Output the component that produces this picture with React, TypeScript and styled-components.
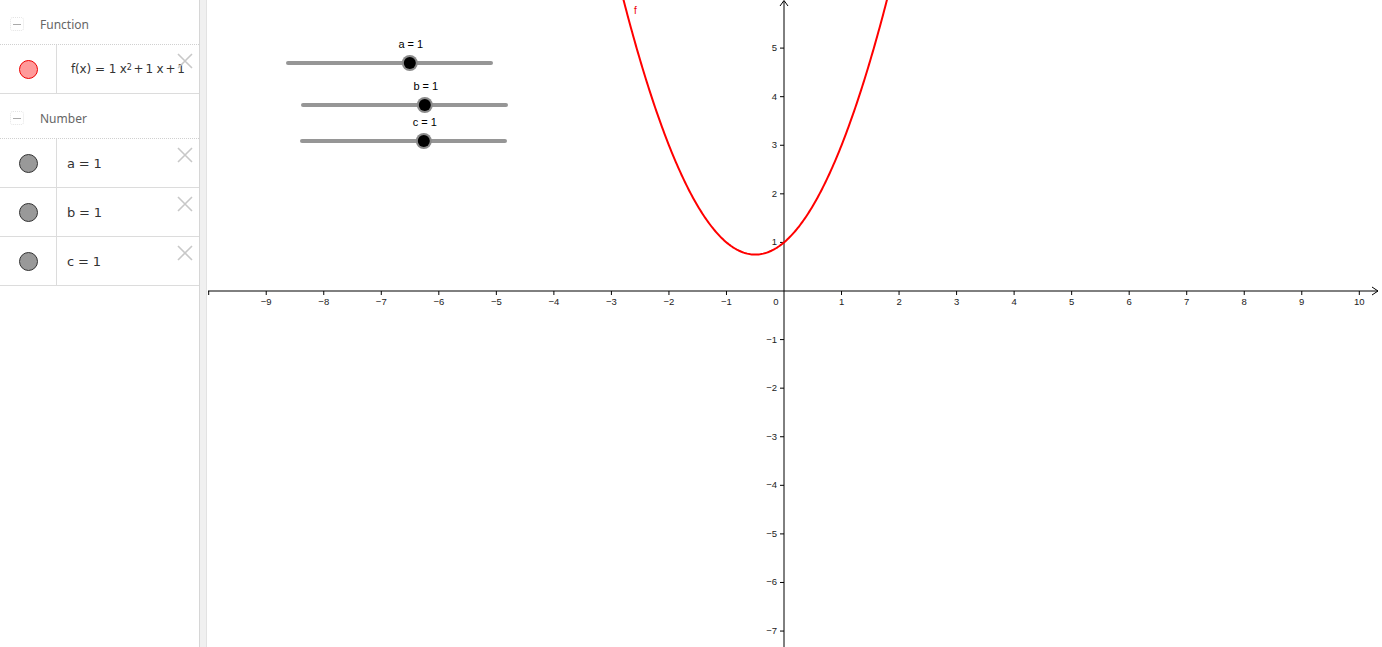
import React from "react";
import styled, { createGlobalStyle } from "styled-components";

const Global = createGlobalStyle`
  html, body { margin: 0; padding: 0; background: #fff; overflow: hidden; }
  #root { width: 1382px; height: 647px; }
`;

const Page = styled.div`
  display: flex;
  width: 1382px;
  height: 647px;
  font-family: "Noto Sans", "Liberation Sans", sans-serif;
`;

const Sidebar = styled.div`
  width: 200px;
  flex: none;
  border-right: 1px solid #d6d6d6;
  box-sizing: border-box;
  background: #fff;
  display: flex;
  flex-direction: column;
`;

const Splitter = styled.div`
  width: 7px;
  flex: none;
  background: #f0f0f0;
  border-right: 1px solid #e2e2e2;
  box-sizing: border-box;
`;

const GroupHeader = styled.div<{ $h: number }>`
  height: ${(p) => p.$h}px;
  box-sizing: border-box;
  display: flex;
  align-items: center;
  padding: 4px 0 0 10px;
  gap: 16px;
  border-bottom: 1px dotted #d0d0d0;
  color: #666;
  font-size: 12px;
`;

const Collapse = styled.span`
  width: 14px;
  height: 14px;
  box-sizing: border-box;
  border: 1px dotted #e4e4e4;
  border-radius: 3px;
  display: flex;
  align-items: center;
  justify-content: center;
  &::after {
    content: "";
    width: 8px;
    height: 1px;
    background: #aaa;
  }
`;

const Row = styled.div`
  height: 49px;
  box-sizing: border-box;
  display: flex;
  border-bottom: 1px solid #dcdcdc;
  position: relative;
`;

const MarkerCell = styled.div`
  width: 57px;
  flex: none;
  border-right: 1px solid #dcdcdc;
  box-sizing: border-box;
  display: flex;
  align-items: center;
  justify-content: center;
`;

const Marker = styled.span<{ $fill: string; $stroke: string }>`
  width: 19px;
  height: 19px;
  border-radius: 50%;
  box-sizing: border-box;
  background: ${(p) => p.$fill};
  border: 1px solid ${(p) => p.$stroke};
`;

const Formula = styled.div<{ $pad: number; $size: number }>`
  display: flex;
  align-items: center;
  padding-left: ${(p) => p.$pad}px;
  font-family: "DejaVu Sans", sans-serif;
  font-size: ${(p) => p.$size}px;
  color: #333;
  white-space: nowrap;
  letter-spacing: -0.2px;
  sup { font-size: 8px; position: relative; top: -2px; }
`;

const Op = styled.span<{ $m: number }>`
  margin: 0 ${(p) => p.$m}px;
`;

const Close = styled.span`
  position: absolute;
  right: 6px;
  top: 7px;
  width: 16px;
  height: 16px;
`;

const GraphArea = styled.div`
  flex: 1;
  position: relative;
  background: #fff;
`;

const OX = 577;
const OY = 291;
const UX = 57.53;
const UY = 48.58;

const sx = (x: number) => OX + x * UX;
const sy = (y: number) => OY - y * UY;

function parabola() {
  const pts: string[] = [];
  for (let x = -3.2; x <= 2.3; x += 0.02) {
    const y = x * x + x + 1;
    pts.push(`${sx(x).toFixed(2)},${sy(y).toFixed(2)}`);
  }
  return "M" + pts.join(" L");
}

const CloseIcon = () => (
  <Close>
    <svg width="16" height="16" viewBox="0 0 16 16">
      <path d="M1 1 L15 15 M15 1 L1 15" stroke="#c8c8c8" strokeWidth="1.6" />
    </svg>
  </Close>
);

const sliders = [
  { name: "a", x1: 81, x2: 284, y: 63, ly: 48 },
  { name: "b", x1: 96, x2: 299, y: 105, ly: 90 },
  { name: "c", x1: 95, x2: 298, y: 141, ly: 126 },
];

const Graph = () => {
  const xs: number[] = [];
  for (let k = -10; k <= 10; k++) if (k !== 0) xs.push(k);
  const ys: number[] = [];
  for (let k = -7; k <= 5; k++) if (k !== 0) ys.push(k);
  const lbl = (k: number) => (k < 0 ? "\u2212" + -k : String(k));
  return (
    <svg width="1175" height="647" viewBox="0 0 1175 647" style={{ display: "block" }}>
      <g fontFamily="Liberation Sans, Arial, sans-serif" fontSize="9.5" fill="#222">
        <line x1="1" y1={OY} x2="1171" y2={OY} stroke="#000" strokeWidth="1" />
        <path d={`M1165 ${OY - 4} L1171 ${OY} L1165 ${OY + 4}`} fill="none" stroke="#000" strokeWidth="1" />
        <line x1={OX} y1="1" x2={OX} y2="647" stroke="#000" strokeWidth="1" />
        <path d={`M${OX - 4} 6 L${OX} 0.5 L${OX + 4} 6`} fill="none" stroke="#000" strokeWidth="1" />
        {xs.map((k) => (
          <g key={"x" + k}>
            <line x1={sx(k)} y1={OY} x2={sx(k)} y2={OY + 4} stroke="#000" />
            {k > -10 && (
              <text x={sx(k)} y={OY + 14} textAnchor="middle">
                {lbl(k)}
              </text>
            )}
          </g>
        ))}
        <text x={OX - 8} y={OY + 14} textAnchor="middle">0</text>
        {ys.map((k) => (
          <g key={"y" + k}>
            <line x1={OX - 4} y1={sy(k)} x2={OX} y2={sy(k)} stroke="#000" />
            <text x={OX - 7} y={sy(k) + 3} textAnchor="end">
              {lbl(k)}
            </text>
          </g>
        ))}
      </g>
      <path d={parabola()} fill="none" stroke="#f00" strokeWidth="2" />
      <text x="427" y="14" fontFamily="Liberation Sans, Arial, sans-serif" fontSize="10" fill="#e00">f</text>
      {sliders.map((s) => {
        const px = s.x1 + 0.6 * (s.x2 - s.x1);
        return (
          <g key={s.name}>
            <line x1={s.x1} y1={s.y} x2={s.x2} y2={s.y} stroke="#969696" strokeWidth="4" strokeLinecap="round" />
            <circle cx={px} cy={s.y} r="8" fill="#8a8a8a" />
            <circle cx={px} cy={s.y} r="6" fill="#000" />
            <text x={px + 1} y={s.ly} textAnchor="middle" fontFamily="Liberation Sans, Arial, sans-serif" fontSize="11" fill="#000">
              {s.name} = 1
            </text>
          </g>
        );
      })}
    </svg>
  );
};

export default function App() {
  return (
    <>
      <Global />
      <Page>
        <Sidebar>
          <GroupHeader $h={45}>
            <Collapse />
            Function
          </GroupHeader>
          <Row>
            <MarkerCell>
              <Marker $fill="#ff9a9a" $stroke="#ee0000" />
            </MarkerCell>
            <Formula $pad={14} $size={12}>
              f(x)<Op $m={4}>=</Op>1 x<sup>2</sup>
              <Op $m={2}>+</Op>1 x<Op $m={2}>+</Op>1
            </Formula>
            <CloseIcon />
          </Row>
          <GroupHeader $h={45}>
            <Collapse />
            Number
          </GroupHeader>
          {["a", "b", "c"].map((n) => (
            <Row key={n}>
              <MarkerCell>
                <Marker $fill="#999999" $stroke="#333333" />
              </MarkerCell>
              <Formula $pad={10} $size={13}>
                {n}
                <Op $m={4}>=</Op>1
              </Formula>
              <CloseIcon />
            </Row>
          ))}
        </Sidebar>
        <Splitter />
        <GraphArea>
          <Graph />
        </GraphArea>
      </Page>
    </>
  );
}
